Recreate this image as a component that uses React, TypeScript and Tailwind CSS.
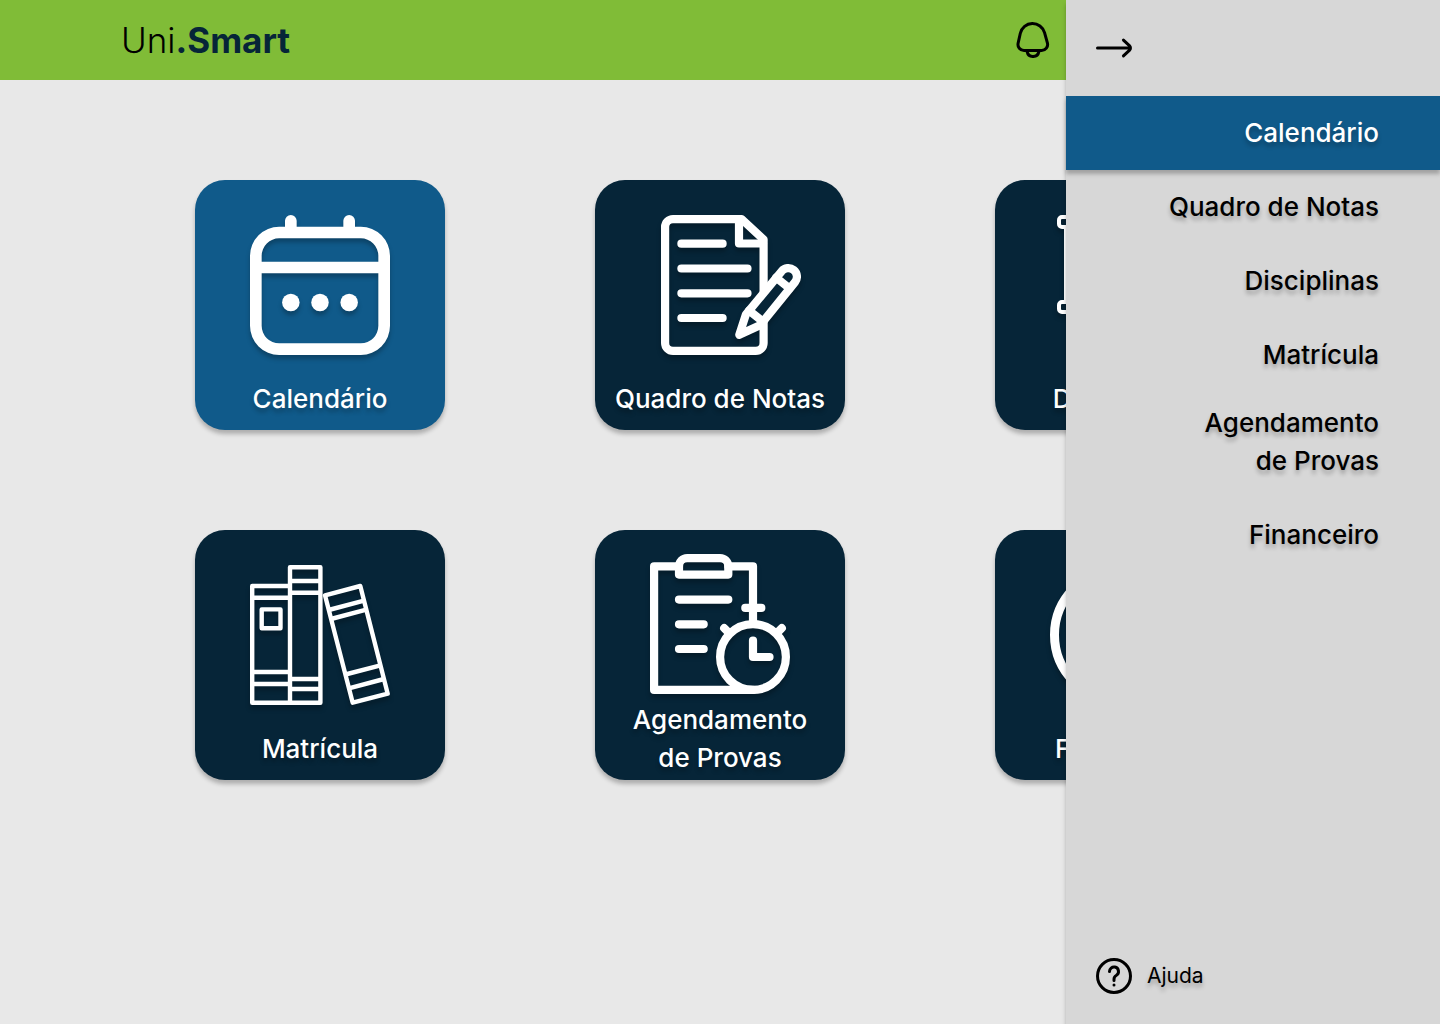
import type { ReactNode } from "react";

const textShadow = "[text-shadow:0_4px_4px_rgb(0_0_0/0.25)]";

function CalendarIcon() {
  return (
    <svg viewBox="0 0 24 24" className="size-[140px]" fill="currentColor" aria-hidden="true">
      <path d="M19,2H18V1a1,1,0,0,0-2,0V2H8V1A1,1,0,0,0,6,1V2H5A5.006,5.006,0,0,0,0,7V19a5.006,5.006,0,0,0,5,5H19a5.006,5.006,0,0,0,5-5V7A5.006,5.006,0,0,0,19,2ZM2,7A3,3,0,0,1,5,4H19a3,3,0,0,1,3,3V8H2ZM19,22H5a3,3,0,0,1-3-3V10H22v9A3,3,0,0,1,19,22Z" />
      <circle cx="7" cy="15" r="1.5" />
      <circle cx="12" cy="15" r="1.5" />
      <circle cx="17" cy="15" r="1.5" />
    </svg>
  );
}

function NotesIcon() {
  return (
    <svg
      viewBox="-11 0 162 140"
      className="h-[140px] w-[162px]"
      fill="none"
      stroke="currentColor"
      strokeWidth="8.2"
      strokeLinecap="round"
      strokeLinejoin="round"
      aria-hidden="true"
    >
      <g transform="translate(11 0)">
        <path d="M12 4.1H80.500L102.600 24.500V128a7.900 7.900 0 0 1-7.900 7.900H12a7.900 7.900 0 0 1-7.900-7.900V12A7.900 7.900 0 0 1 12 4.100Z" />
        <path d="M78 5V28.500H102" />
        <path d="M20.400 28.700H61.600M20.400 53.500H86.500M20.400 78.300H86.500M20.400 103H61.600" />
        <path
          className="fill-[#062538]"
          d="M120.600 56.300a8.600 8.600 0 0 1 13.400 10.800L99 110.300L78.300 119.800L84.800 99.700Z"
        />
        <path d="M115.100 62.600L128.500 73.400M88 95.500L101.500 106.300" />
      </g>
    </svg>
  );
}

function BoardIcon() {
  return (
    <svg
      viewBox="0 0 140 140"
      className="size-[140px]"
      fill="none"
      stroke="currentColor"
      strokeWidth="4"
      strokeLinejoin="round"
      strokeLinecap="round"
      aria-hidden="true"
    >
      <rect x="9" y="2" width="122" height="10" rx="3" />
      <rect x="9" y="87" width="122" height="10" rx="3" />
      <path d="M16 12V87M124 12V87M70 97V138M70 108L44 138M70 108L96 138" />
    </svg>
  );
}

function BooksIcon() {
  return (
    <svg
      viewBox="0 0 140 140"
      className="size-[140px]"
      fill="none"
      stroke="currentColor"
      strokeWidth="4.4"
      strokeLinejoin="round"
      aria-hidden="true"
    >
      <path d="M40 21H2.200V137.800H40M2.200 32.700H40M2.200 107H40M2.200 119H40" />
      <rect x="11.700" y="44.400" width="18.800" height="18.800" />
      <rect x="40" y="2.200" width="30.400" height="135.600" />
      <path d="M40 16H70M40 27.700H70M40 114H70M40 124H70" />
      <path d="M75 30.300L110.300 21L137.700 128.700L102.700 137.700Z" />
      <path d="M78.700 45L114 35.700M81 54L116.300 44.700M95.300 109.500L130.500 100.300M98.800 123.300L134 114" />
    </svg>
  );
}

function ExamIcon() {
  return (
    <svg
      viewBox="0 0 140 140"
      className="size-[140px]"
      fill="none"
      stroke="currentColor"
      strokeWidth="8.2"
      strokeLinecap="round"
      strokeLinejoin="round"
      aria-hidden="true"
    >
      <path d="M29 12.300H4.100V135.900H103M78.300 12.300H103V68" />
      <path d="M29 20.600V12.300a8.200 8.200 0 0 1 8.200-8.200H70.100a8.200 8.200 0 0 1 8.200 8.200V20.600Z" />
      <path d="M29 45.600H78.300M29 70.300H53.700M29 95H53.700" />
      <circle cx="103" cy="103" r="32.900" />
      <path d="M95.300 53.900H111.300M74.200 74.200L79 79M131.800 74.200L127 79M103 86.500V103H119.500" />
    </svg>
  );
}

function CoinIcon() {
  return (
    <svg
      viewBox="0 0 140 140"
      className="size-[140px]"
      fill="none"
      stroke="currentColor"
      strokeWidth="9"
      strokeLinecap="round"
      aria-hidden="true"
    >
      <circle cx="70" cy="70" r="65.500" />
      <path d="M70 30V110M90 48H60a11 11 0 0 0 0 22H80a11 11 0 0 1 0 22H50" />
    </svg>
  );
}

function BellIcon() {
  return (
    <svg viewBox="0 0 24 24" className="size-9" fill="currentColor" aria-hidden="true">
      <path d="M22.555,13.662l-1.9-6.836A9.321,9.321,0,0,0,2.576,7.3L1.105,13.915A5,5,0,0,0,5.986,20H7.1a5,5,0,0,0,9.8,0h.838a5,5,0,0,0,4.818-6.338ZM12,22a3,3,0,0,1-2.816-2h5.632A3,3,0,0,1,12,22Zm8.126-5.185A2.977,2.977,0,0,1,17.737,18H5.986a3,3,0,0,1-2.928-3.651l1.47-6.616a7.321,7.321,0,0,1,14.2-.372l1.9,6.836A2.977,2.977,0,0,1,20.126,16.815Z" />
    </svg>
  );
}

function ArrowIcon() {
  return (
    <svg
      viewBox="0 0 24 24"
      className="size-9"
      fill="none"
      stroke="currentColor"
      strokeWidth="2"
      strokeLinecap="round"
      aria-hidden="true"
    >
      <path d="M1 12H22.500M18.300 6.700L22.400 10.600a2 2 0 0 1 0 2.800L18.300 17.300" />
    </svg>
  );
}

function HelpIcon() {
  return (
    <svg viewBox="0 0 24 24" className="size-9" fill="currentColor" aria-hidden="true">
      <circle cx="12" cy="12" r="11" fill="none" stroke="currentColor" strokeWidth="2" />
      <path d="M12.717,5.063A4,4,0,0,0,8,9a1,1,0,0,0,2,0,2,2,0,0,1,2.371-1.967,2.024,2.024,0,0,1,1.6,1.595,2,2,0,0,1-1,2.125A3.954,3.954,0,0,0,11,14.257V15a1,1,0,0,0,2,0v-.743a1.982,1.982,0,0,1,.93-1.752,4,4,0,0,0-1.213-7.442Z" />
      <circle cx="12" cy="18" r="1" />
    </svg>
  );
}

type Section = { label: ReactNode; id: string; icon: ReactNode; active?: boolean; tall?: boolean };

const twoLineLabel = (
  <>
    Agendamento
    <br />
    de Provas
  </>
);

const cards: Section[] = [
  { id: "calendario", label: "Calendário", icon: <CalendarIcon />, active: true },
  { id: "notas", label: "Quadro de Notas", icon: <NotesIcon /> },
  { id: "disciplinas", label: "Disciplinas", icon: <BoardIcon /> },
  { id: "matricula", label: "Matrícula", icon: <BooksIcon /> },
  { id: "provas", label: twoLineLabel, icon: <ExamIcon />, tall: true },
  { id: "financeiro", label: "Financeiro", icon: <CoinIcon /> },
];

function Card({ id, label, icon, active, tall }: Section) {
  return (
    <a
      href={`#${id}`}
      className={`flex h-[250px] flex-col items-center justify-end rounded-[30px] text-white shadow-[0_4px_4px_rgb(0_0_0/0.25)] ${
        active ? "bg-[#105a8a]" : "bg-[#062538]"
      } ${tall ? "gap-[7px] pb-[3px]" : "gap-[25px] pb-3"}`}
    >
      <span className="drop-shadow-[0_4px_2px_rgb(0_0_0/0.25)]">{icon}</span>
      <span className={`text-center text-[26px] leading-[38px] font-medium whitespace-nowrap ${textShadow}`}>
        {label}
      </span>
    </a>
  );
}

function Drawer() {
  return (
    <aside className="absolute inset-y-0 right-0 flex w-[374px] flex-col bg-[#d7d7d7] text-black shadow-[0_4px_4px_rgb(0_0_0/0.25)]">
      <div className="flex h-24 shrink-0 items-center pl-[30px]">
        <button type="button" aria-label="Fechar menu">
          <ArrowIcon />
        </button>
      </div>
      <nav className="flex flex-col">
        {cards.map(({ id, label, active, tall }) => (
          <a
            key={id}
            href={`#${id}`}
            className={`pr-[61px] pb-[18px] text-right text-[26px] leading-[38px] font-medium ${textShadow} ${
              active ? "bg-[#105a8a] text-white shadow-[0_4px_4px_rgb(0_0_0/0.25)]" : ""
            } ${tall ? "pt-3" : "pt-[18px]"}`}
          >
            {label}
          </a>
        ))}
      </nav>
      <a href="#ajuda" className="mt-auto mb-[30px] ml-[30px] flex items-center gap-[15px] self-start">
        <HelpIcon />
        <span className={`text-[21px] leading-[30px] ${textShadow}`}>Ajuda</span>
      </a>
    </aside>
  );
}

export default function App() {
  return (
    <div className="relative min-h-screen overflow-hidden bg-[#e8e8e8] font-['Inter',sans-serif]">
      <header className="flex h-20 items-center justify-between bg-[#80bc37] pr-[389px] pl-[121px]">
        <a href="#inicio" className="text-[35px] leading-10 font-light text-black">
          Uni<span className="font-bold text-[#062538]">.Smart</span>
        </a>
        <button type="button" aria-label="Notificações" className="text-black">
          <BellIcon />
        </button>
      </header>
      <main className="grid grid-cols-[repeat(3,250px)] justify-center gap-x-[150px] gap-y-[100px] py-[100px]">
        {cards.map((card) => (
          <Card key={card.id} {...card} />
        ))}
      </main>
      <Drawer />
    </div>
  );
}
